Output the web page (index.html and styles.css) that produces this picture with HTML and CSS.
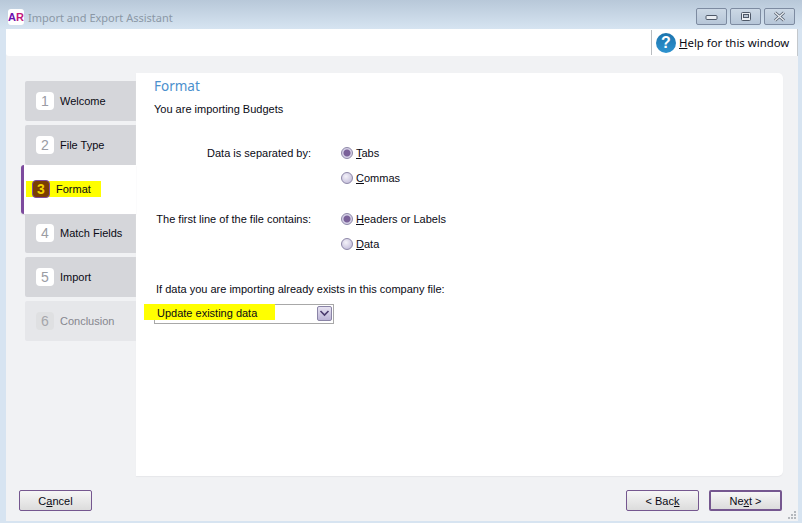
FILE: index.html
```html
<!DOCTYPE html>
<html lang="en">
<head>
<meta charset="utf-8">
<title>Import and Export Assistant</title>
<link rel="stylesheet" href="styles.css">
</head>
<body>
<div class="window">
  <header class="titlebar">
    <span class="app-icon">A<span class="app-r">R</span></span>
    <span class="title">Import and Export Assistant</span>
    <div class="controls">
      <span class="ctl"><svg width="14" height="8" viewBox="0 0 14 8"><rect x="1" y="2.5" width="11" height="4" rx="1" fill="#e9edf2" stroke="#4e5868"/></svg></span>
      <span class="ctl"><svg width="12" height="11" viewBox="0 0 12 11"><rect x="1.5" y="1.5" width="9" height="8" rx="1" fill="#e9edf2" stroke="#4e5868"/><rect x="3.5" y="3.5" width="5" height="3" fill="#b8c4d2" stroke="#4e5868"/></svg></span>
      <span class="ctl"><svg width="13" height="11" viewBox="0 0 13 11"><path d="M2 1.5 L11 9.5 M11 1.5 L2 9.5" stroke="#525c6b" stroke-width="3"/><path d="M2 1.5 L11 9.5 M11 1.5 L2 9.5" stroke="#e9edf2" stroke-width="1.4"/></svg></span>
    </div>
  </header>
  <div class="client">
    <div class="toolbar">
      <span class="tool-sep"></span>
      <svg class="help-icon" width="22" height="22" viewBox="0 0 22 22">
        <defs><linearGradient id="hg" x1="0" y1="0" x2="0" y2="1"><stop offset="0" stop-color="#1b74ae"/><stop offset="1" stop-color="#2e93cf"/></linearGradient></defs>
        <circle cx="11" cy="11" r="10" fill="url(#hg)"/>
        <text x="11" y="16" text-anchor="middle" class="help-q">?</text>
      </svg>
      <span class="help-text"><u>H</u>elp for this window</span>
    </div>
    <main class="main">
      <nav class="steps">
        <div class="step"><span class="badge">1</span><span>Welcome</span></div>
        <div class="step"><span class="badge">2</span><span>File Type</span></div>
        <div class="step active"><span class="mark"><span class="badge">3</span><span>Format</span></span></div>
        <div class="step"><span class="badge">4</span><span>Match Fields</span></div>
        <div class="step"><span class="badge">5</span><span>Import</span></div>
        <div class="step disabled"><span class="badge">6</span><span>Conclusion</span></div>
      </nav>
      <section class="panel">
        <h1 class="heading">Format</h1>
        <p class="intro">You are importing Budgets</p>
        <div class="options">
          <span class="opt-label">Data is separated by:</span>
          <label class="radio"><span class="dot on"></span><span><u>T</u>abs</span></label>
          <label class="radio second"><span class="dot"></span><span><u>C</u>ommas</span></label>
        </div>
        <div class="options">
          <span class="opt-label">The first line of the file contains:</span>
          <label class="radio"><span class="dot on"></span><span><u>H</u>eaders or Labels</span></label>
          <label class="radio second"><span class="dot"></span><span><u>D</u>ata</span></label>
        </div>
        <p class="exists">If data you are importing already exists in this company file:</p>
        <div class="combo">
          <span class="combo-value">Update existing data</span>
          <span class="combo-btn"><svg width="11" height="9" viewBox="0 0 11 9"><path d="M1.5 2 L5.5 6 L9.5 2" fill="none" stroke="#4a3a6c" stroke-width="1.6"/></svg></span>
        </div>
      </section>
    </main>
    <footer class="footer">
      <button class="btn">C<u>a</u>ncel</button>
      <span class="spacer"></span>
      <button class="btn">&lt; Bac<u>k</u></button>
      <button class="btn primary">Ne<u>x</u>t &gt;</button>
      <svg class="grip" width="8" height="8" viewBox="0 0 8 8"><path d="M6 0h2v2H6zM3 3h2v2H3zM6 3h2v2H6zM0 6h2v2H0zM3 6h2v2H3zM6 6h2v2H6z" fill="#b4b8bd"/></svg>
    </footer>
  </div>
</div>
</body>
</html>
```
FILE: styles.css
```css
* { box-sizing: border-box; }
html, body { margin: 0; padding: 0; }
body {
  width: 802px;
  height: 523px;
  overflow: hidden;
  font-family: "Liberation Sans", Arial, sans-serif;
  font-size: 11px;
  color: #0a0a14;
}
.window {
  width: 802px;
  height: 523px;
  display: flex;
  flex-direction: column;
  background: #d7e4f1;
}
.titlebar {
  height: 29px;
  flex: none;
  display: flex;
  align-items: center;
  padding: 0 7px 0 8px;
  background: linear-gradient(#b8c8d9, #d6e4f1);
}
.app-icon {
  width: 16px;
  height: 16px;
  margin-top: 5px;
  background: #fff;
  border-radius: 3px;
  font: bold 11px/16px "Liberation Sans", sans-serif;
  text-align: center;
  color: #6a12b0;
}
.app-r { color: #c2187c; }
.title {
  margin: 5px 0 0 4px;
  font-family: "Noto Sans", sans-serif;
  font-size: 11px;
  color: #8b98a6;
}
.controls {
  margin-left: auto;
  display: flex;
  gap: 3px;
  margin-top: 4px;
}
.ctl {
  width: 31px;
  height: 17px;
  display: flex;
  align-items: center;
  justify-content: center;
  border: 1px solid #7d8ba1;
  border-radius: 2px;
  background: linear-gradient(#ccd8e5, #b6c6d8);
}
.client {
  height: 492px;
  flex: none;
  margin: 0 4px 0 6px;
  display: flex;
  flex-direction: column;
  background: #f1f2f4;
}
.toolbar {
  height: 27px;
  flex: none;
  display: flex;
  align-items: center;
  background: #fff;
  border-radius: 0 0 0 3px;
  padding-left: 645px;
  border-right: 1px solid #c4c8cc;
}
.tool-sep {
  width: 1px;
  height: 25px;
  background: #b8bcc0;
  margin-right: 3px;
}
.help-icon { flex: none; }
.help-q {
  font: bold 16px "Liberation Sans", sans-serif;
  fill: #fff;
}
.help-text {
  margin-left: 2px;
  font-family: "Noto Sans", sans-serif;
  font-size: 11.4px;
  white-space: nowrap;
}
.main {
  height: 420px;
  flex: none;
  display: flex;
  align-items: flex-start;
  padding: 17px 0 0 19px;
}
.steps {
  width: 111px;
  flex: none;
  margin-top: 8px;
  display: flex;
  flex-direction: column;
  gap: 4px;
}
.step {
  height: 40px;
  display: flex;
  align-items: center;
  gap: 6px;
  padding-left: 11px;
  background: #d5d6da;
  border-radius: 2px 0 0 2px;
}
.badge {
  width: 18px;
  height: 18px;
  flex: none;
  display: flex;
  align-items: center;
  justify-content: center;
  background: #fff;
  border-radius: 4px;
  font-size: 14px;
  color: #9a9ca4;
}
.step.active {
  position: relative;
  height: 49px;
  margin: -4px 0 -5px -4px;
  padding: 0 0 1px;
  background: #fff;
  border-left: 3px solid #7d4a9e;
  border-radius: 3px 0 0 3px;
  box-shadow: 0 1px 1px #d8d8dc;
}
.mark {
  display: flex;
  align-items: center;
  gap: 6px;
  width: 75px;
  height: 16px;
  margin-left: 2px;
  padding-left: 6px;
  background: #ffff00;
}
.step.active .badge {
  background: #7a3e00;
  color: #f2d400;
  border: 1px solid #7d4a9e;
  font-weight: 700;
}
.step.disabled {
  background: #e6e7ea;
  color: #85868e;
}
.step.disabled .badge { background: #dfe0e2; color: #a5a6ab; }
.panel {
  flex: none;
  width: 647px;
  height: 403px;
  background: #fff;
  border-radius: 0 5px 5px 0;
  padding: 4px 0 0 18px;
  box-shadow: 0 1px 1px #e6e7ea;
}
.heading {
  margin: 0;
  font-family: "Noto Sans", sans-serif;
  font-size: 13.5px;
  font-weight: 400;
  line-height: 19px;
  color: #4b90cd;
}
.intro {
  margin: 5px 0 0;
  line-height: 16px;
}
.options {
  display: grid;
  grid-template-columns: 157px auto;
  grid-auto-rows: 25px;
  column-gap: 30px;
  align-items: center;
  justify-content: start;
  margin: 16px 0 0 0;
}
.intro + .options { margin-top: 23px; }
.opt-label { text-align: right; white-space: nowrap; }
.radio {
  display: flex;
  align-items: center;
  gap: 3px;
  white-space: nowrap;
}
.second { grid-column: 2; }
.dot {
  width: 12px;
  height: 12px;
  border-radius: 50%;
  border: 1px solid #8d87a8;
  background: radial-gradient(circle at 40% 35%, #f4f2f9, #c5bfdc 80%);
}
.dot.on {
  background: radial-gradient(circle, #7a6199 0 3px, #d5d0e6 4px);
}
.exists {
  margin: 25px 0 0 2px;
  line-height: 16px;
}
.combo {
  width: 180px;
  height: 20px;
  margin-top: 7px;
  display: flex;
  align-items: flex-start;
  justify-content: space-between;
  border: 1px solid #a8a8a8;
  padding-right: 1px;
}
.combo-value {
  width: 131px;
  height: 16px;
  margin: -1px 0 0 -11px;
  padding-left: 13px;
  background: #ffff00;
  line-height: 19px;
  white-space: nowrap;
}
.combo-btn {
  width: 15px;
  height: 15px;
  margin-top: 1px;
  display: flex;
  align-items: center;
  justify-content: center;
  border: 1px solid #8a84a6;
  border-radius: 2px;
  background: linear-gradient(#e6e2f1, #bcb4d6);
}
.footer {
  flex: 1;
  display: flex;
  align-items: flex-start;
  gap: 10px;
  padding: 14px 0 0 13px;
}
.spacer { width: 514px; flex: none; }
.btn {
  width: 73px;
  height: 21px;
  padding: 0;
  font: inherit;
  color: inherit;
  border: 1px solid #75578f;
  border-radius: 2px;
  background: linear-gradient(#f6f6f6, #dcdcdc);
}
.btn.primary { border-width: 2px; }
.grip { margin: 21px 0 0 -4px; flex: none; }
```
